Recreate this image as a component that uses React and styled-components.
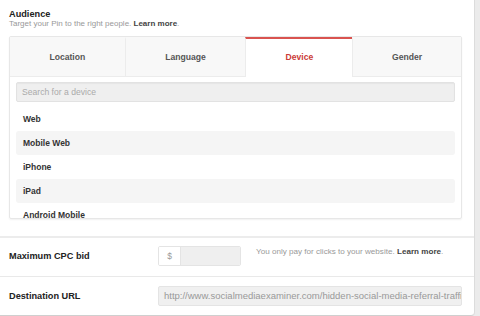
import React from 'react';
import styled, { createGlobalStyle } from 'styled-components';

const GlobalStyle = createGlobalStyle`
    html, body {
        margin: 0;
        padding: 0;
        background: #ebebeb;
        font-family: "Liberation Sans", Arial, Helvetica, sans-serif;
        color: #333;
    }
`;

const Panel = styled.div`
    width: 474px;
    height: 315px;
    background: #fff;
    border-right: 1px solid #dcdcdc;
    border-bottom: 1px solid #cfcfcf;
    border-bottom-right-radius: 4px;
    overflow: hidden;
`;

const Audience = styled.section`
    padding: 9px 12px 17px 9px;
    border-bottom: 2px solid #ececec;
`;

const Title = styled.h2`
    margin: 0;
    font-size: 9.2px;
    line-height: 10px;
    font-weight: bold;
    color: #222;
`;

const Hint = styled.p`
    margin: 0;
    font-size: 8px;
    line-height: 10px;
    color: #999;

    b {
        color: #444;
    }
`;

const TabBox = styled.div`
    margin-top: 7px;
    border: 1px solid #e7e7e7;
    border-radius: 2px;
    box-shadow: 0 1px 2px rgba(0, 0, 0, 0.06);
`;

const TabBar = styled.div`
    display: grid;
    grid-template-columns: 115fr 121fr 107fr 109fr;
    height: 39px;
    border-bottom: 1px solid #ececec;
`;

const Tab = styled.div`
    display: flex;
    align-items: center;
    justify-content: center;
    font-size: 8.6px;
    font-weight: bold;
    background: ${({ active }) => (active ? '#fff' : '#f8f8f8')};
    color: ${({ active }) => (active ? '#cb3b36' : '#555')};
    border-top: 2px solid ${({ active }) => (active ? '#d9534f' : 'transparent')};
    border-left: 1px solid #ececec;
    margin-bottom: ${({ active }) => (active ? '-1px' : '0')};
    padding-bottom: 2px;

    &:first-child {
        border-left: none;
    }
`;

const TabBody = styled.div`
    padding: 4px 6px 0;
`;

const Search = styled.input`
    box-sizing: border-box;
    width: 100%;
    height: 20px;
    padding: 0 5px;
    border: 1px solid #e2e2e2;
    border-radius: 2px;
    background: #efefef;
    box-shadow: inset 0 1px 1px rgba(0, 0, 0, 0.04);
    font-family: inherit;
    font-size: 8.6px;
    color: #333;
    outline: none;

    &::placeholder {
        color: #aaa;
    }
`;

const List = styled.ul`
    list-style: none;
    margin: 5px 0 0;
    padding: 0;
    height: 111px;
    overflow: hidden;
`;

const Item = styled.li`
    height: 24px;
    display: flex;
    align-items: center;
    padding-left: 7px;
    padding-bottom: 1px;
    box-sizing: border-box;
    border-radius: 3px;
    font-size: 8.5px;
    font-weight: bold;
    color: #333;
    background: ${({ striped }) => (striped ? '#f5f5f5' : 'transparent')};
`;

const Row = styled.div`
    display: flex;
    align-items: center;
    height: 39px;
    padding-left: 9px;
    padding-bottom: 2px;
    box-sizing: border-box;
    border-bottom: ${({ last }) => (last ? 'none' : '1px solid #e9e9e9')};
`;

const Label = styled.div`
    width: 149px;
    flex-shrink: 0;
    font-size: 9.2px;
    font-weight: bold;
    color: #222;
`;

const MoneyField = styled.div`
    display: flex;
    width: 83px;
    height: 20px;
    border: 1px solid #e4e4e4;
    border-radius: 2px;
    box-sizing: border-box;
    overflow: hidden;
`;

const Currency = styled.span`
    width: 21px;
    display: flex;
    align-items: center;
    justify-content: center;
    font-size: 8.5px;
    color: #999;
    background: #fff;
    border-right: 1px solid #e4e4e4;
`;

const Amount = styled.div`
    flex: 1;
    background: #efefef;
`;

const Help = styled(Hint)`
    margin-left: 15px;
    margin-top: -8px;
    font-size: 8.1px;
`;

const UrlField = styled.div`
    box-sizing: border-box;
    width: 304px;
    height: 20px;
    padding: 0 5px;
    display: flex;
    align-items: center;
    border: 1px solid #e4e4e4;
    border-radius: 2px;
    background: #f0f0f0;
    font-size: 9.5px;
    color: #999;
    white-space: nowrap;
    overflow: hidden;
`;

const tabs = ['Location', 'Language', 'Device', 'Gender'];
const devices = ['Web', 'Mobile Web', 'iPhone', 'iPad', 'Android Mobile'];

export default function App() {
    return (
        <>
            <GlobalStyle />
            <Panel>
                <Audience>
                    <Title>Audience</Title>
                    <Hint>Target your Pin to the right people. <b>Learn more</b>.</Hint>
                    <TabBox>
                        <TabBar>
                            {tabs.map((t) => (
                                <Tab key={t} active={t === 'Device'}>{t}</Tab>
                            ))}
                        </TabBar>
                        <TabBody>
                            <Search placeholder="Search for a device" />
                            <List>
                                {devices.map((d, i) => (
                                    <Item key={d} striped={i % 2 === 1}>{d}</Item>
                                ))}
                            </List>
                        </TabBody>
                    </TabBox>
                </Audience>
                <Row>
                    <Label>Maximum CPC bid</Label>
                    <MoneyField>
                        <Currency>$</Currency>
                        <Amount />
                    </MoneyField>
                    <Help>You only pay for clicks to your website. <b>Learn more</b>.</Help>
                </Row>
                <Row last>
                    <Label>Destination URL</Label>
                    <UrlField>http://www.socialmediaexaminer.com/hidden-social-media-referral-traffic</UrlField>
                </Row>
            </Panel>
        </>
    );
}
